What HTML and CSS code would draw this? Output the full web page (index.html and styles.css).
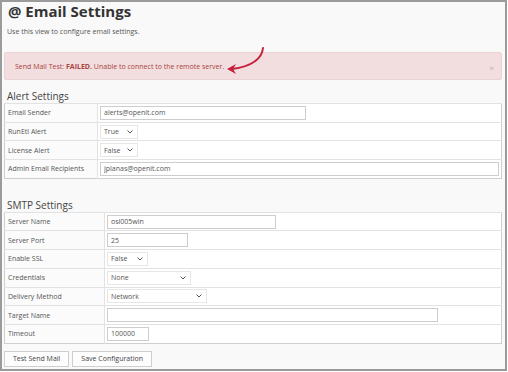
FILE: index.html
```html
<!DOCTYPE html>
<html lang="en">
<head>
    <meta charset="UTF-8">
    <title>Email Settings</title>
    <link rel="stylesheet" href="styles.css">
</head>
<body>
    <div class="frame">
        <h1 class="title">@ Email Settings</h1>
        <p class="lead">Use this view to configure email settings.</p>

        <!-- test result -->
        <div class="alert">
            <span>Send Mail Test: <b>FAILED.</b> Unable to connect to the remote server.</span>
            <span class="close">×</span>
        </div>
        <svg class="arrow" width="44" height="30" viewBox="0 0 44 30">
            <path d="M39 2 C38 12 30 20 8 23" fill="none" stroke="#c41f3b" stroke-width="2" stroke-linecap="round"/>
            <path d="M3 23 L12 18 L9 23 L12 28 Z" fill="#c41f3b"/>
        </svg>

        <h2 class="section">Alert Settings</h2>
        <table class="settings alert-table">
            <tr>
                <td class="label">Email Sender</td>
                <td><input class="field" style="width: 206px" type="text" value="alerts@openit.com"></td>
            </tr>
            <tr>
                <td class="label">RunEtl Alert</td>
                <td><div class="select" style="width: 38px"><span>True</span><svg width="6" height="4" viewBox="0 0 6 4"><path d="M0.5 0.5 L3 3 L5.5 0.5" fill="none" stroke="#555" stroke-width="1"/></svg></div></td>
            </tr>
            <tr>
                <td class="label">License Alert</td>
                <td><div class="select" style="width: 38px"><span>False</span><svg width="6" height="4" viewBox="0 0 6 4"><path d="M0.5 0.5 L3 3 L5.5 0.5" fill="none" stroke="#555" stroke-width="1"/></svg></div></td>
            </tr>
            <tr>
                <td class="label">Admin Email Recipients</td>
                <td><input class="field" style="width: 399px" type="text" value="jplanas@openit.com"></td>
            </tr>
        </table>

        <h2 class="section smtp">SMTP Settings</h2>
        <table class="settings smtp-table">
            <tr>
                <td class="label">Server Name</td>
                <td><input class="field" style="width: 169px" type="text" value="osl005win"></td>
            </tr>
            <tr>
                <td class="label">Server Port</td>
                <td><input class="field" style="width: 81px" type="text" value="25"></td>
            </tr>
            <tr>
                <td class="label">Enable SSL</td>
                <td><div class="select" style="width: 41px"><span>False</span><svg width="6" height="4" viewBox="0 0 6 4"><path d="M0.5 0.5 L3 3 L5.5 0.5" fill="none" stroke="#555" stroke-width="1"/></svg></div></td>
            </tr>
            <tr>
                <td class="label">Credentials</td>
                <td><div class="select" style="width: 84px"><span>None</span><svg width="6" height="4" viewBox="0 0 6 4"><path d="M0.5 0.5 L3 3 L5.5 0.5" fill="none" stroke="#555" stroke-width="1"/></svg></div></td>
            </tr>
            <tr>
                <td class="label">Delivery Method</td>
                <td><div class="select" style="width: 100px"><span>Network</span><svg width="6" height="4" viewBox="0 0 6 4"><path d="M0.5 0.5 L3 3 L5.5 0.5" fill="none" stroke="#555" stroke-width="1"/></svg></div></td>
            </tr>
            <tr>
                <td class="label">Target Name</td>
                <td><input class="field" style="width: 331px" type="text" value=""></td>
            </tr>
            <tr>
                <td class="label">Timeout</td>
                <td><input class="field" style="width: 42px" type="text" value="100000"></td>
            </tr>
        </table>

        <div class="actions">
            <button class="btn">Test Send Mail</button>
            <button class="btn">Save Configuration</button>
        </div>
    </div>
</body>
</html>
```

FILE: styles.css
```css
body {
    margin: 0;
    font-family: "Open Sans", "Liberation Sans", sans-serif;
    background-color: #fff;
    color: #555;
}

/* outer frame of the view */
.frame {
    position: relative;
    box-sizing: border-box;
    width: 507px;
    height: 371px;
    border: 2px solid #9b9b9b;
    background-color: #f9f9f9;
    padding: 0 3px 0 2px;
}

.title {
    margin: -1px 0 0 4px;
    font-size: 15px;
    line-height: 20px;
    font-weight: 700;
    color: #333;
}

.lead {
    margin: 6px 0 0 3px;
    font-size: 7px;
    line-height: 10px;
    color: #555;
}

/* error box */
.alert {
    box-sizing: border-box;
    height: 28px;
    margin-top: 15px;
    padding: 0 7px 0 10px;
    display: flex;
    align-items: center;
    justify-content: space-between;
    background-color: #f2dede;
    border: 1px solid #ecd2d5;
    border-radius: 2px;
    color: #a94442;
    font-size: 7px;
}

.alert b {
    font-weight: 700;
}

.close {
    color: #c9a9aa;
    font-size: 8px;
    padding-top: 2px;
}

/* red pointer drawn over the alert */
.arrow {
    position: absolute;
    left: 222px;
    top: 44px;
}

.section {
    margin: 10px 0 1px 3px;
    font-size: 10px;
    line-height: 12px;
    font-weight: 400;
    color: #444;
}

.section.smtp {
    margin-top: 20px;
    margin-bottom: 1px;
}

.settings {
    width: 498px;
    border-collapse: collapse;
    background-color: #fff;
    border: 1px solid #cfcfcf;
}

.settings td {
    height: 17.7px;
    padding: 0 2px;
    border-top: 1px solid #e2e2e2;
    vertical-align: middle;
}

.settings td.label {
    padding-left: 3px;
    font-size: 7px;
    color: #555;
    background-color: #fbfbfb;
    border-right: 1px solid #e2e2e2;
}

.alert-table td.label {
    width: 88px;
}

.smtp-table td.label {
    width: 94px;
}

.field {
    box-sizing: border-box;
    display: block;
    height: 14px;
    margin: 0;
    padding: 0 3px;
    border: 1px solid #cdcdcd;
    font-family: "Open Sans", "Liberation Sans", sans-serif;
    font-size: 7px;
    color: #555;
    background-color: #fff;
    outline: none;
}

.select {
    box-sizing: border-box;
    height: 14px;
    display: flex;
    align-items: center;
    justify-content: space-between;
    padding: 0 4px 0 3px;
    border: 1px solid #e6e6e6;
    font-size: 7px;
    color: #555;
    background-color: #fff;
}

.actions {
    display: flex;
    gap: 3px;
    margin-top: 7px;
}

.btn {
    box-sizing: border-box;
    height: 16px;
    padding: 0 8px;
    border: 1px solid #cfcfcf;
    background-color: #fdfdfd;
    font-family: "Open Sans", "Liberation Sans", sans-serif;
    font-size: 7px;
    color: #444;
}
```
